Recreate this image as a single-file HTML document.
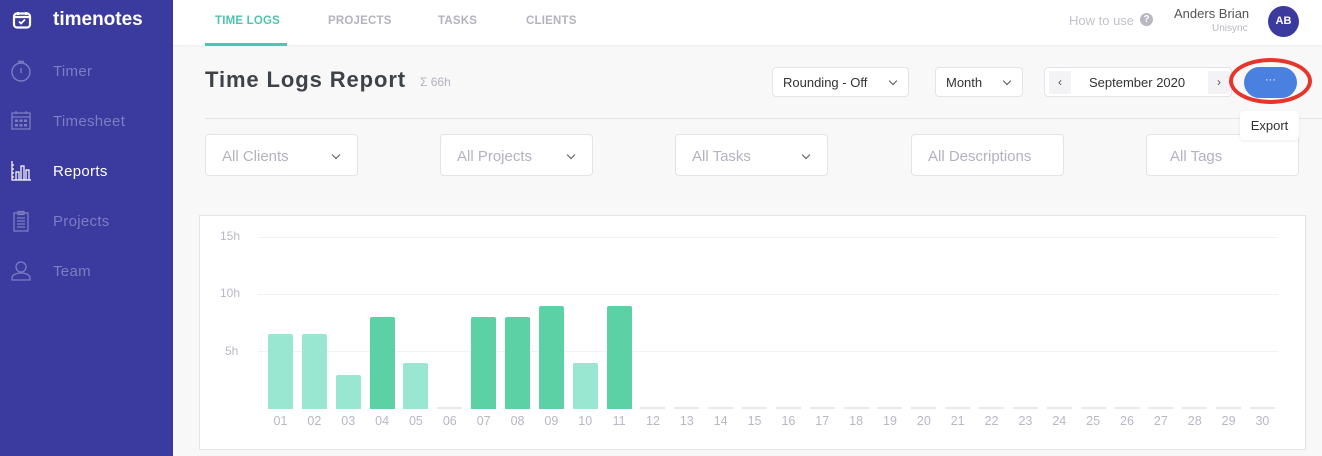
<!DOCTYPE html>
<html><head><meta charset="utf-8"><style>
*{margin:0;padding:0;box-sizing:border-box}
body{width:1322px;height:456px;overflow:hidden;background:#f8f8f9;font-family:"Liberation Sans",sans-serif;position:relative}
.a{position:absolute}
#side{left:0;top:0;width:173px;height:456px;background:#3a3a9f}
.nav{left:53px;font-size:15px;color:#7d7dc2;letter-spacing:.3px}
.ico{left:10px;width:22px;height:22px}
#top{left:173px;top:0;width:1149px;height:45px;background:#fff;box-shadow:0 1px 3px rgba(0,0,0,.05)}
.tab{top:15px;font-size:11.5px;font-weight:bold;color:#b3b2c0;letter-spacing:.2px}
.box{background:#fff;border:1px solid #e3e3ea;border-radius:4px}
.flt{top:134px;height:42px;width:153px;font-size:15px;color:#b3b2c0;padding:13px 0 0 16px}
.chev{position:absolute;width:6px;height:6px;border-right:1.3px solid #555;border-bottom:1.3px solid #555;transform:rotate(45deg)}
.yl{font-size:12px;color:#b8b7c4;left:220px}
.gl{left:258px;width:1020px;height:1px;background:#f2f2f5}
.xl{top:414px;font-size:12.5px;color:#b8b7c4;width:30px;text-align:center}
</style></head><body>
<div id="side" class="a">
 <svg class="a" style="left:12px;top:10px" width="20" height="20" viewBox="0 0 20 20"><rect x="2" y="3.5" width="16" height="14" rx="3" fill="none" stroke="#fff" stroke-width="2.2"/><path d="M6 2v3M14 2v3M2 7h16" stroke="#fff" stroke-width="2.2"/><path d="M7 11.5l2 2 4-4" fill="none" stroke="#fff" stroke-width="1.8"/></svg>
 <div class="a" style="left:53px;top:9px;font-size:19px;font-weight:bold;color:#fff">timenotes</div>
 <svg class="a ico" style="top:60px" viewBox="0 0 22 22"><circle cx="11" cy="12" r="9" fill="none" stroke="#7d7dc2" stroke-width="1.4"/><path d="M8 1.5h6M11 1.5v1.5M11 8v5" stroke="#7d7dc2" stroke-width="1.4"/></svg>
 <div class="a nav" style="top:63px">Timer</div>
 <svg class="a ico" style="top:110px" viewBox="0 0 22 22"><rect x="2" y="3" width="18" height="16" fill="none" stroke="#7d7dc2" stroke-width="1.3"/><path d="M2 7h18M6 1v3M16 1v3" stroke="#7d7dc2" stroke-width="1.3"/><g fill="#7d7dc2"><rect x="5" y="9.5" width="3" height="2.5"/><rect x="9.5" y="9.5" width="3" height="2.5"/><rect x="14" y="9.5" width="3" height="2.5"/><rect x="5" y="14" width="3" height="2.5"/><rect x="9.5" y="14" width="3" height="2.5"/><rect x="14" y="14" width="3" height="2.5"/></g></svg>
 <div class="a nav" style="top:113px">Timesheet</div>
 <svg class="a ico" style="top:160px" viewBox="0 0 22 22"><path d="M2 1v19h19M2 5h2M2 9h2M2 13h2M2 17h2M6 20v-8h3v8M11 20v-14h3v14M16 20v-10h3v10" fill="none" stroke="#fff" stroke-width="1.2"/></svg>
 <div class="a nav" style="top:163px;color:#fff">Reports</div>
 <svg class="a ico" style="top:210px" viewBox="0 0 22 22"><rect x="4" y="3" width="14" height="18" fill="none" stroke="#7d7dc2" stroke-width="1.3"/><path d="M8 1.5h6v3H8zM7 8h8M7 11h8M7 14h8M7 17h8" fill="none" stroke="#7d7dc2" stroke-width="1.2"/></svg>
 <div class="a nav" style="top:213px">Projects</div>
 <svg class="a ico" style="top:260px" viewBox="0 0 22 22"><circle cx="11" cy="7" r="5" fill="none" stroke="#7d7dc2" stroke-width="1.3"/><path d="M2 20v-2c0-3 4-5 9-5s9 2 9 5v2z" fill="none" stroke="#7d7dc2" stroke-width="1.3"/></svg>
 <div class="a nav" style="top:263px">Team</div>
</div>
<div id="top" class="a"></div>
<div class="a tab" style="left:215px;color:#4fc4b0">TIME LOGS</div>
<div class="a" style="left:205px;top:43px;width:82px;height:3px;background:#4fc4b0"></div>
<div class="a tab" style="left:328px">PROJECTS</div>
<div class="a tab" style="left:438px">TASKS</div>
<div class="a tab" style="left:526px">CLIENTS</div>
<div class="a" style="left:1069px;top:13px;font-size:13px;color:#c3c2cc">How to use</div>
<div class="a" style="left:1140px;top:13px;width:13px;height:13px;border-radius:50%;background:#b8b7c2;color:#fff;font-size:10px;font-weight:bold;text-align:center;line-height:13px">?</div>
<div class="a" style="left:1174px;top:6px;font-size:13px;color:#555">Anders Brian</div>
<div class="a" style="left:1212px;top:23px;font-size:10px;color:#b8b7c2">Unisync</div>
<div class="a" style="left:1268px;top:6px;width:31px;height:31px;border-radius:50%;background:#3a3a9f;color:#fff;font-size:11px;font-weight:bold;text-align:center;line-height:31px">AB</div>
<div class="a" style="left:205px;top:67px;font-size:22px;font-weight:bold;color:#3e434a;letter-spacing:.9px">Time Logs Report</div>
<div class="a" style="left:420px;top:75px;font-size:12px;color:#b3b2c0">Σ 66h</div>
<div class="a box" style="left:772px;top:67px;width:137px;height:30px;font-size:13px;color:#333;padding:7px 10px">Rounding - Off<span class="chev" style="right:12px;top:10px"></span></div>
<div class="a box" style="left:935px;top:67px;width:88px;height:30px;font-size:13px;color:#333;padding:7px 10px">Month<span class="chev" style="right:12px;top:10px"></span></div>
<div class="a box" style="left:1044px;top:67px;width:188px;height:30px;font-size:13px;color:#333">
 <div class="a" style="left:4px;top:3px;width:22px;height:23px;background:#f3f3f5;text-align:center;font-size:12px;line-height:22px;color:#555">‹</div>
 <div class="a" style="left:44px;top:7px">September 2020</div>
 <div class="a" style="left:163px;top:3px;width:22px;height:23px;background:#f3f3f5;text-align:center;font-size:12px;line-height:22px;color:#555">›</div>
</div>
<div class="a" style="left:1244px;top:67px;width:53px;height:31px;border-radius:16px;background:#4a80e0;color:#fff;font-size:11px;text-align:center;line-height:26px">···</div>
<div class="a" style="left:1229px;top:58px;width:83px;height:46px;border-radius:50%;border:4px solid #e8352c"></div>
<div class="a" style="left:205px;top:118px;width:1117px;height:1px;background:#e3e3ea"></div>
<div class="a box flt" style="left:205px">All Clients<span class="chev" style="right:18px;top:17px"></span></div>
<div class="a box flt" style="left:440px">All Projects<span class="chev" style="right:18px;top:17px"></span></div>
<div class="a box flt" style="left:675px">All Tasks<span class="chev" style="right:18px;top:17px"></span></div>
<div class="a box flt" style="left:911px">All Descriptions</div>
<div class="a box flt" style="left:1146px;padding-left:23px">All Tags</div>
<div class="a" style="left:1240px;top:111px;width:59px;height:29px;background:#fff;border-radius:4px;font-size:13px;color:#333;text-align:center;line-height:29px;box-shadow:0 1px 3px rgba(0,0,0,.08)">Export</div>
<div class="a" style="left:199px;top:215px;width:1107px;height:235px;background:#fff;border:1px solid #e3e3ea"></div>
<div class="a yl" style="top:229px">15h</div><div class="a gl" style="top:237px"></div>
<div class="a yl" style="top:286px">10h</div><div class="a gl" style="top:294px"></div>
<div class="a yl" style="top:344px;left:225px">5h</div><div class="a gl" style="top:351px"></div>
<div id="bars"></div>
<script>
var h=[75,75,34,92,46,0,92,92,103,46,103],d=[0,0,0,1,0,0,1,1,1,0,1],s='';
for(var i=0;i<30;i++){var x=268+i*33.86;
if(i<11&&h[i]>0)s+='<div class="a" style="left:'+x+'px;top:'+(409-h[i])+'px;width:25px;height:'+h[i]+'px;border-radius:2px 2px 0 0;background:'+(d[i]?'#5dd1a6':'#99e6d1')+'"></div>';
else s+='<div class="a" style="left:'+x+'px;top:407px;width:25px;height:2px;background:#e8e8ee"></div>';
s+='<div class="a xl" style="left:'+(x-2.5)+'px">'+(i<9?'0':'')+(i+1)+'</div>';}
document.getElementById('bars').innerHTML=s;
</script>
</body></html>
